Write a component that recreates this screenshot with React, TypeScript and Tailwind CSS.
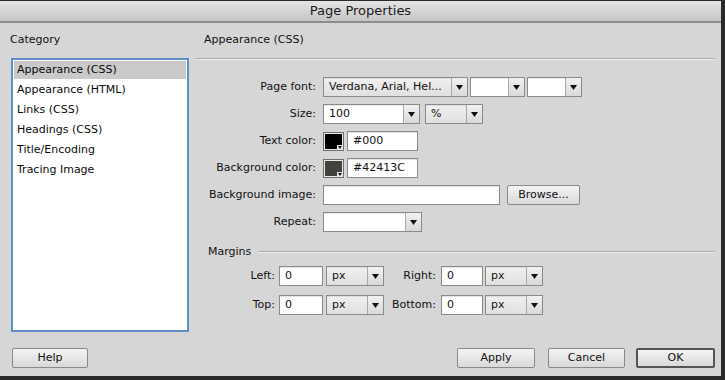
import React from "react";

const font = { fontFamily: '"DejaVu Sans", Verdana, sans-serif' };

function Arrow() {
  return (
    <div className="w-[16px] h-full flex items-center justify-center border-l border-[#a9a9a9] bg-gradient-to-b from-[#f1f1f1] to-[#d9d9d9]">
      <svg width="7" height="5" viewBox="0 0 7 5">
        <path d="M0 0 L7 0 L3.5 5 Z" fill="#111" />
      </svg>
    </div>
  );
}

function Select({ w, text, bg = "white" }: { w: string; text?: string; bg?: "white" | "gray" }) {
  return (
    <div
      className={`${w} h-5 flex border border-[#8a8a8a] shadow-[inset_0_1px_0_rgba(0,0,0,0.08)] ${
        bg === "white" ? "bg-white" : "bg-gradient-to-b from-[#f0f0f0] to-[#e0e0e0]"
      }`}
    >
      <div className="flex-1 px-[5px] flex items-center text-[11px] text-[#111] whitespace-nowrap overflow-hidden">
        {text}
      </div>
      <Arrow />
    </div>
  );
}

function Input({ w, text }: { w: string; text?: string }) {
  return (
    <div className={`${w} h-5 bg-white border border-[#8a8a8a] shadow-[inset_0_1px_1px_rgba(0,0,0,0.12)] px-[5px] flex items-center text-[11px] text-[#111]`}>
      {text}
    </div>
  );
}

function Swatch({ color }: { color: string }) {
  return (
    <div className="relative w-[21px] h-[19px] border border-[#6e6e6e] bg-[#e8e8e8] p-px">
      <div className="w-full h-full" style={{ backgroundColor: color }} />
      <div className="absolute right-0 bottom-0 w-[6px] h-[5px] bg-[#e9e9e9] flex items-center justify-center">
        <svg width="4" height="3" viewBox="0 0 4 3">
          <path d="M0 0 L4 0 L2 3 Z" fill="#111" />
        </svg>
      </div>
    </div>
  );
}

function Row({ label, children }: { label: string; children: React.ReactNode }) {
  return (
    <div className="flex items-center h-5">
      <div className="w-[124px] text-right text-[11px] text-[#111] pr-[3px] whitespace-nowrap">{label}</div>
      <div className="ml-[4px] flex items-center">{children}</div>
    </div>
  );
}

function Button({ label, w, primary }: { label: string; w: string; primary?: boolean }) {
  return (
    <div
      className={`${w} h-5 flex items-center justify-center rounded-[2px] text-[11px] text-[#111] bg-gradient-to-b from-[#f4f4f4] to-[#d9d9d9] ${
        primary ? "border-2 border-[#555]" : "border border-[#8a8a8a]"
      }`}
    >
      {label}
    </div>
  );
}

export default function App() {
  const items = ["Appearance (CSS)", "Appearance (HTML)", "Links (CSS)", "Headings (CSS)", "Title/Encoding", "Tracing Image"];
  return (
    <div className="w-[725px] h-[380px] bg-[#2a2a2a] pt-px pr-[4px] pb-[4px] flex flex-col" style={font}>
      {/* Title bar */}
      <div className="h-[22px] shrink-0 bg-gradient-to-b from-[#e4e4e4] to-[#c6c6c6] border-b-2 border-[#8d8d8d] flex items-center justify-center text-[13px] text-[#1a1a1a]">
        Page Properties
      </div>
      {/* Body */}
      <div className="flex-1 bg-[#d6d6d6] flex flex-col">
        <div className="flex">
          {/* Left column */}
          <div className="ml-[11px] w-[178px] flex flex-col">
            <div className="h-[35px] flex items-center text-[11px] text-[#111] -ml-px">Category</div>
            <div className="h-[274px] border-2 border-[#5d8fca] bg-white">
              {items.map((it, i) => (
                <div key={it} className="h-5 relative flex items-center">
                  {i === 0 && <div className="absolute inset-x-px top-[1px] bottom-[1px] bg-[#c9c9c9]" />}
                  <span className="relative pl-[4px] text-[11px] text-[#0a0a0a]">{it}</span>
                </div>
              ))}
            </div>
          </div>
          {/* Right column */}
          <div className="ml-[6px] w-[521px] flex flex-col">
            <div className="h-[35px] flex items-center pl-[9px] text-[11px] text-[#111]">Appearance (CSS)</div>
            <div className="h-[2px] mr-px rounded-full border-t border-[#a9a9a9] bg-[#eeeeee]" />
            <div className="mt-[17px] flex flex-col gap-[7px]">
              <Row label="Page font:">
                <Select w="w-[145px]" text="Verdana, Arial, Hel..." bg="gray" />
                <div className="ml-[2px]"><Select w="w-[55px]" /></div>
                <div className="ml-[2px]"><Select w="w-[55px]" /></div>
              </Row>
              <Row label="Size:">
                <Select w="w-[97px]" text="100" />
                <div className="ml-[5px]"><Select w="w-[58px]" text="%" bg="gray" /></div>
              </Row>
              <Row label="Text color:">
                <Swatch color="#000000" />
                <div className="ml-[3px]"><Input w="w-[71px]" text="#000" /></div>
              </Row>
              <Row label="Background color:">
                <Swatch color="#42413C" />
                <div className="ml-[3px]"><Input w="w-[71px]" text="#42413C" /></div>
              </Row>
              <Row label="Background image:">
                <Input w="w-[177px]" />
                <div className="ml-[7px]"><Button label="Browse..." w="w-[73px]" /></div>
              </Row>
              <Row label="Repeat:">
                <Select w="w-[99px]" />
              </Row>
            </div>
            <div className="mt-[12px] h-4 flex items-center pl-[13px]">
              <span className="text-[11px] text-[#111]">Margins</span>
              <div className="ml-[7px] mr-px flex-1 h-[2px] border-t border-[#a9a9a9] bg-[#eeeeee] rounded-full" />
            </div>
            <div className="mt-[6px] flex flex-col gap-[9px]">
              {[
                ["Left:", "Right:"],
                ["Top:", "Bottom:"],
              ].map(([a, b]) => (
                <div key={a} className="flex items-center h-5">
                  <div className="w-[81px] text-right text-[11px] text-[#111] pr-[1px]">{a}</div>
                  <div className="ml-[3px]"><Input w="w-[44px]" text="0" /></div>
                  <div className="ml-[3px]"><Select w="w-[58px]" text="px" bg="gray" /></div>
                  <div className="w-[53px] text-right text-[11px] text-[#111] pr-[1px]">{b}</div>
                  <div className="ml-[4px]"><Input w="w-[42px]" text="0" /></div>
                  <div className="ml-[2px]"><Select w="w-[58px]" text="px" bg="gray" /></div>
                </div>
              ))}
            </div>
          </div>
        </div>
        {/* Buttons */}
        <div className="mt-[16px] flex items-center pr-[6px]">
          <div className="ml-[12px]"><Button label="Help" w="w-[76px]" /></div>
          <div className="flex-1" />
          <Button label="Apply" w="w-[78px]" />
          <div className="ml-[13px]"><Button label="Cancel" w="w-[77px]" /></div>
          <div className="ml-[11px]"><Button label="OK" w="w-[79px]" primary /></div>
        </div>
      </div>
    </div>
  );
}
